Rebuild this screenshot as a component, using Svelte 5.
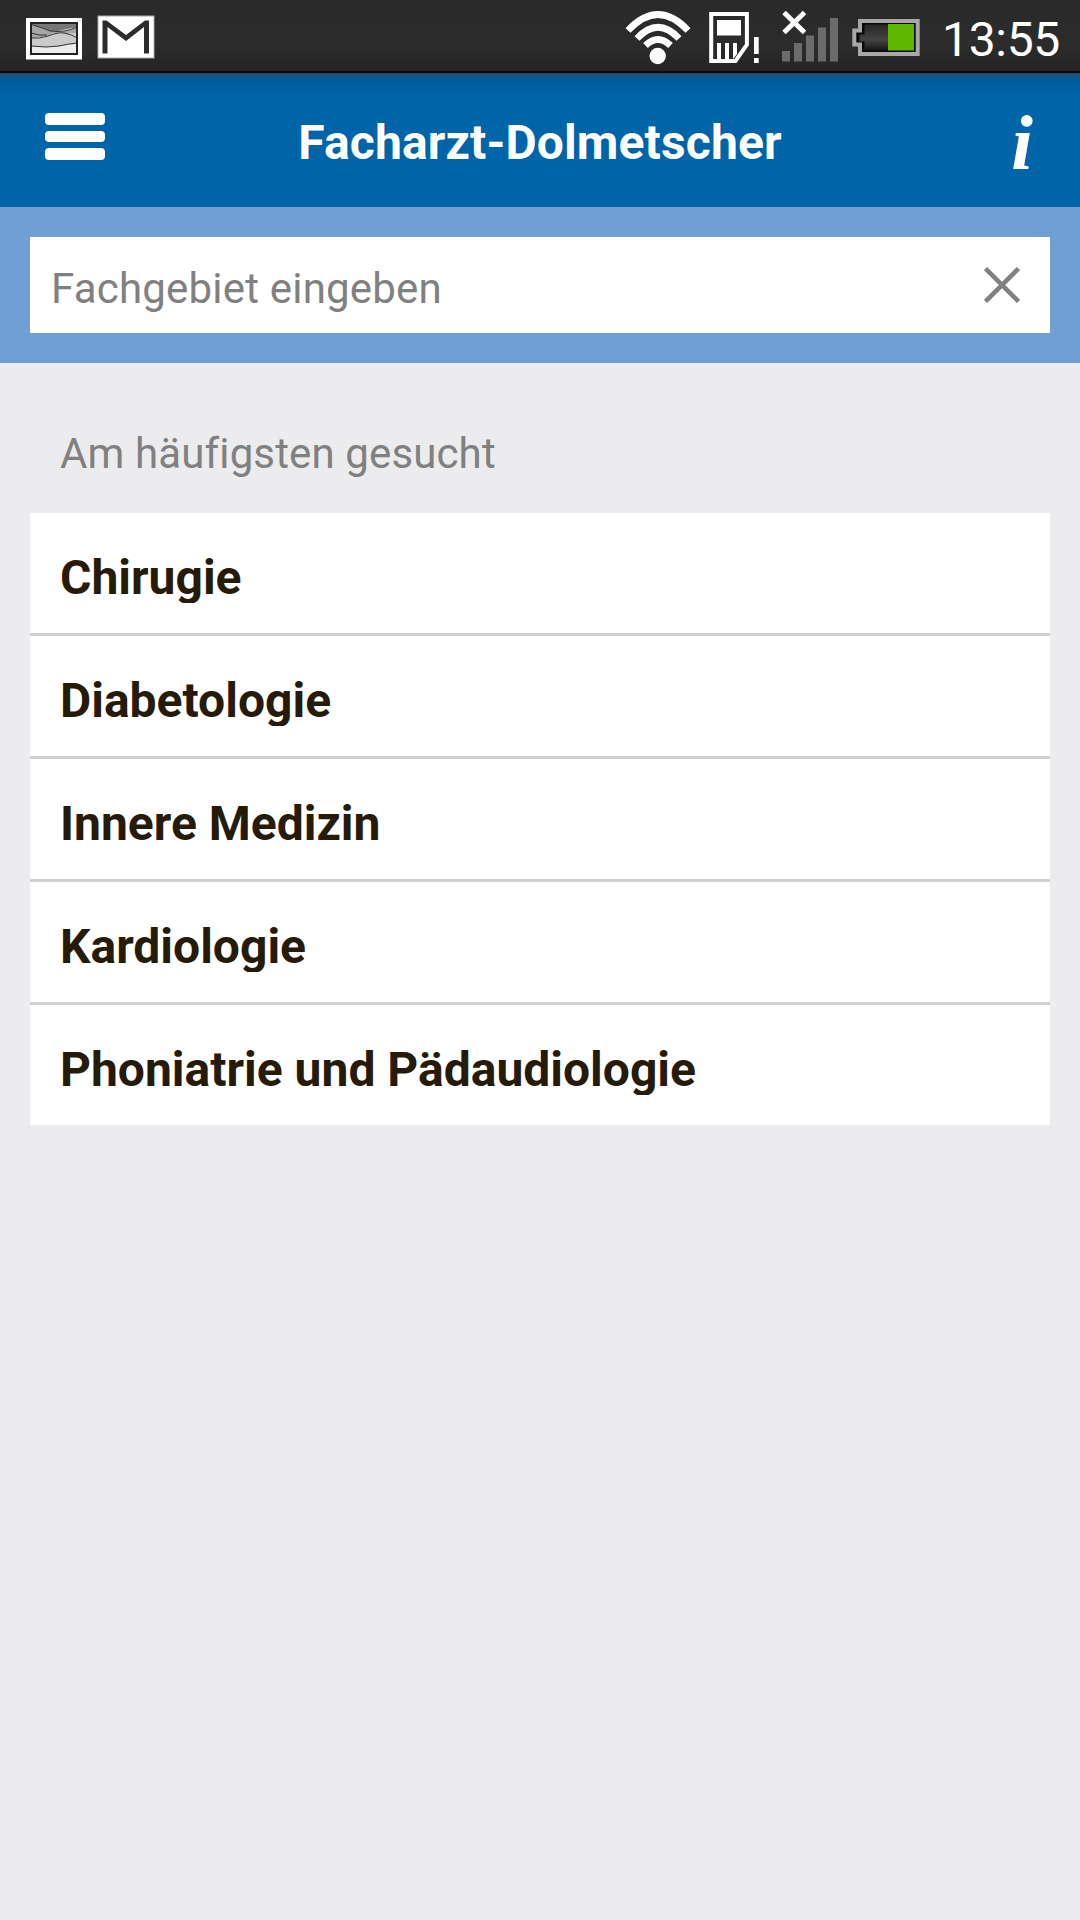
<script lang="ts">
  const time = "13:55";
  const topics = [
    "Chirugie",
    "Diabetologie",
    "Innere Medizin",
    "Kardiologie",
    "Phoniatrie und Pädaudiologie",
  ];

  // signal strength bars: x, top
  const bars = [
    [782, 51], [794, 43], [806, 35.5], [818, 27.5], [830, 18],
  ];

  let query = $state("");
</script>

<div class="screen">
  <div class="status">
    <svg class="notif" width="190" height="73" viewBox="0 0 190 73">
      <rect x="26" y="18" width="56" height="41.500" fill="#fff" />
      <rect x="31" y="23" width="46" height="31" fill="#ededed" />
      <path d="M31 23h46v4q-9 2-15 3-5 2-12 1-8-3-19-6z" fill="#777" />
      <path d="M31 25q11 3 19 6 7 1 14 0 7-1 13-4v6q-7 1-15 0-6-1-13 2-8 3-18 3z" fill="#a6a6a6" />
      <path d="M31 38q10 0 18-3 7-3 13-2 7 1 15 0v11q-8 0-14 2-15 2-32 0z" fill="#cacaca" />
      <g fill="none" stroke="#333" stroke-width="1">
        <path d="M31 24.500q11 3 19 6.500 7 1 14 0 7-1 13-4" />
        <path d="M31 33q8 3 16 2" />
        <path d="M31 38q8 1 17-2 10-4 16-3 7 1 13 5" />
        <path d="M31 46q16 2 28 0 8-2 18-3" />
      </g>
      <rect x="31" y="23" width="46" height="31" fill="none" stroke="#222" stroke-width="2" />
      <rect x="98" y="16" width="56" height="42" fill="#fff" stroke="#aaa" stroke-width="1" />
      <path d="M102.500 53.500V20.500h4l19.500 14.500 19-14.500h4v33h-5V27L126 41 107.500 27v26.500z" fill="#2c2c2c" />
    </svg>
    <svg class="system" width="330" height="73" viewBox="600 0 330 73">
      <g fill="none" stroke="#fff" stroke-width="6.800">
        <path d="M628 30.500Q658-1.500 688 30.500" />
        <path d="M637 38.500Q658 16 679 38.500" />
        <path d="M645.500 45.500Q658 33.500 670.500 45.500" />
      </g>
      <circle cx="657.700" cy="56" r="8.200" fill="#fff" />

      <path d="M711.200 13.900h35.700v30.800L735.500 60.900h-24.300z" fill="none" stroke="#fff" stroke-width="4" />
      <rect x="717" y="20" width="24" height="15.500" fill="#fff" />
      <path d="M717 43h4v17h-4zM725 43h4v17h-4zM733 43h4v11l-4 5z" fill="#fff" />
      <path d="M754 37h4.700v17H754zM754 58h4.700v5H754z" fill="#fff" />

      {#each bars as [x, y] (x)}
        <rect {x} {y} width="8" height={61.5 - y} fill="#6b6b6b" />
      {/each}
      <path d="M784 12.500 804.500 32.500M804.500 12.500 784 32.500" stroke="#fff" stroke-width="5" />

      <path d="M860 21h57.700v33H860v-9.500h-5.700v-14h5.700z" fill="#090909" stroke="#aaa7aa" stroke-width="4" />
      <path d="M864.500 24.500H888v26h-23.500v-9h-5v-7h5z" fill="url(#cell)" />
      <rect x="888" y="24" width="26" height="26.500" fill="#60b700" />
      <defs>
        <linearGradient id="cell" x1="0" y1="0" x2="0" y2="1">
          <stop offset="0" stop-color="#262626" />
          <stop offset=".6" stop-color="#444" />
          <stop offset="1" stop-color="#151515" />
        </linearGradient>
      </defs>
    </svg>
    <span class="clock">{time}</span>
  </div>

  <header>
    <button class="menu" aria-label="Menü">
      <i></i><i></i><i></i>
    </button>
    <h1>Facharzt-Dolmetscher</h1>
    <button class="info" aria-label="Info">i</button>
  </header>

  <div class="search">
    <div class="field">
      <input type="text" placeholder="Fachgebiet eingeben" bind:value={query} />
      <button class="clear" aria-label="Löschen" onclick={() => (query = "")}>
        <svg width="36" height="36" viewBox="0 0 36 36">
          <path d="M1.500 1.500l33 33M34.500 1.500l-33 33" stroke="#808080" stroke-width="4.500" />
        </svg>
      </button>
    </div>
  </div>

  <main>
    <h2>Am häufigsten gesucht</h2>
    <ul>
      {#each topics as topic (topic)}
        <li><span>{topic}</span></li>
      {/each}
    </ul>
  </main>
</div>

<style>
  :global(body) { margin: 0; background: #ececee; }
  .screen {
    width: 1080px; height: 1920px; overflow: hidden;
    background: #ececee; font-family: Roboto, "Liberation Sans", sans-serif;
  }
  button { border: 0; padding: 0; margin: 0; background: none; }
  svg { display: block; flex: none; }

  .status {
    display: flex; box-sizing: border-box; height: 73px;
    background: linear-gradient(#292929, #2c2c2c 60%, #242424);
    border-bottom: 2px solid #0b0b0b;
  }
  .system { margin-left: auto; }
  .clock {
    width: 138px; margin-left: 12px; box-sizing: border-box;
    color: #fff; font-size: 48px; line-height: 79px; letter-spacing: -0.3px; white-space: nowrap;
  }

  header {
    display: grid; grid-template-columns: 150px 1fr 150px; height: 134px;
    background: linear-gradient(#2b4c62, #1a5581 3px, #005a9b 5px, #0064a8 24px, #0064a8);
  }
  .menu { width: 60px; margin: 40px 0 0 45px; display: flex; flex-direction: column; gap: 6px; height: 47px; }
  .menu i { display: block; width: 60px; height: 11.7px; border-radius: 4px; background: #fff; }
  h1 {
    margin: 0; color: #fff; font-size: 48px; font-weight: 700; text-align: center;
    line-height: 139px; letter-spacing: 0.13px; white-space: nowrap;
  }
  .info {
    justify-self: end; width: 60px; margin-right: 28px; color: #fff;
    font: italic bold 78px/132px "Liberation Serif", serif;
  }

  .search { padding: 30px; background: #6f9ed5; }
  .field { display: flex; align-items: center; height: 96px; background: #fff; }
  input {
    flex: 1; min-width: 0; height: 96px; box-sizing: border-box; border: 0; outline: 0;
    padding: 7px 0 0 21px; background: none; font: 42px Roboto, sans-serif; letter-spacing: 0.2px; color: #221a08;
  }
  input::placeholder { color: #808080; opacity: 1; }
  .clear { margin-right: 30px; }

  main { padding: 0 30px; }
  h2 {
    margin: 0; height: 150px; padding: 0 30px; color: #808080;
    font-size: 42px; font-weight: 400; line-height: 182px; letter-spacing: 0.13px;
  }
  ul { list-style: none; margin: 0; padding: 0; }
  li { height: 120px; padding: 0 30px; background: #fff; display: flex; align-items: flex-start; }
  li + li { border-top: 3px solid #d0d0d2; }
  /* the text box ends tight under the baseline and cuts the descenders */
  li span {
    margin-top: 39px; height: 51px; overflow: hidden; color: #251b08;
    font-size: 48px; font-weight: 700; line-height: 51px; white-space: nowrap;
  }
</style>
